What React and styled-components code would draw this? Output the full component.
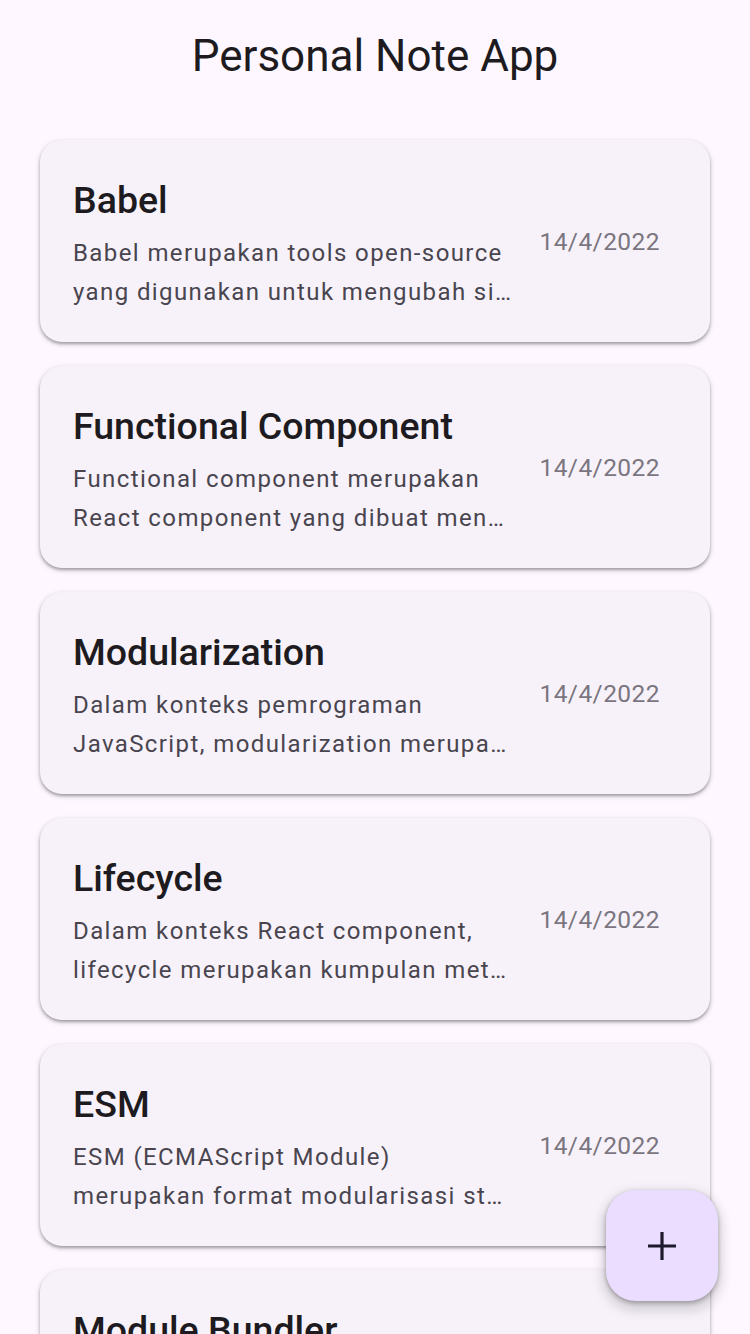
import styled, { createGlobalStyle } from 'styled-components';

const GlobalStyle = createGlobalStyle`
    html, body {
        margin: 0;
        padding: 0;
        background: #fef7ff;
        font-family: Roboto, "Noto Sans", sans-serif;
        color: #1d1b20;
    }
`;

const Page = styled.div`
    min-height: 100vh;
    background: #fef7ff;
`;

const Header = styled.header`
    height: 112px;
    display: flex;
    align-items: center;
    justify-content: center;
`;

const AppTitle = styled.h1`
    margin: 0;
    font-size: 44px;
    font-weight: 400;
    line-height: 1;
    color: #1d1b20;
`;

const List = styled.main`
    display: flex;
    flex-direction: column;
    gap: 24px;
    padding: 28px 40px 40px;
`;

const Card = styled.article`
    display: flex;
    align-items: center;
    gap: 28px;
    padding: 36px 50px 30px 33px;
    background: #f7f2fa;
    border-radius: 22px;
    box-shadow: 0 2px 3px rgba(0, 0, 0, 0.28), 0 2px 5px 1px rgba(0, 0, 0, 0.12);
`;

const Content = styled.div`
    flex: 1;
    min-width: 0;
`;

const NoteTitle = styled.h2`
    margin: 0 0 9px;
    font-size: 37.5px;
    font-weight: 500;
    line-height: 49px;
    color: #1d1b20;
`;

const Body = styled.p`
    margin: 0;
    font-size: 24px;
    line-height: 39px;
    letter-spacing: 1.4px;
    color: #49454f;
`;

const BodyLine = styled.span`
    display: block;
    white-space: nowrap;
    overflow: hidden;
    text-overflow: ellipsis;
`;

const DateText = styled.span`
    flex-shrink: 0;
    margin-bottom: 6px;
    font-size: 24.5px;
    line-height: 35px;
    letter-spacing: 0.44px;
    color: #7a757f;
`;

const Fab = styled.button`
    position: fixed;
    right: 32px;
    bottom: 33px;
    width: 112px;
    height: 111px;
    border: none;
    border-radius: 30px;
    background: #eaddff;
    display: flex;
    align-items: center;
    justify-content: center;
    cursor: pointer;
    box-shadow: 0 2px 5px rgba(0, 0, 0, 0.3), 0 6px 12px 4px rgba(0, 0, 0, 0.14);
`;

const notes = [
    { id: 1, title: 'Babel', body: 'Babel merupakan tools open-source yang digunakan untuk mengubah sintaks ECMAScript 2015+ menjadi sintaks yang didukung oleh JavaScript engine versi lama.', date: '14/4/2022' },
    { id: 2, title: 'Functional Component', body: 'Functional component merupakan React component yang dibuat menggunakan fungsi JavaScript.', date: '14/4/2022' },
    { id: 3, title: 'Modularization', body: 'Dalam konteks pemrograman JavaScript, modularization merupakan teknik dalam memecah atau menggunakan kode dalam berkas JavaScript secara terpisah.', date: '14/4/2022' },
    { id: 4, title: 'Lifecycle', body: 'Dalam konteks React component, lifecycle merupakan kumpulan method yang menjadi siklus hidup mulai dari component dibuat.', date: '14/4/2022' },
    { id: 5, title: 'ESM', body: 'ESM (ECMAScript Module) merupakan format modularisasi standar JavaScript.', date: '14/4/2022' },
    { id: 6, title: 'Module Bundler', body: 'Dalam konteks pemrograman JavaScript, module bundler merupakan tools yang digunakan untuk menggabungkan seluruh modul JavaScript.', date: '14/4/2022' },
];

// split off the first wrapped line so the second one can be cut with an ellipsis mid-word
const BODY_WIDTH = 439;
let ctx = null;
function splitLines(text) {
    if (!ctx) {
        ctx = document.createElement('canvas').getContext('2d');
        ctx.font = '400 24px Roboto';
        ctx.letterSpacing = '1.4px';
    }
    const words = text.split(' ');
    let first = '';
    let i = 0;
    for (; i < words.length; i++) {
        const next = first ? first + ' ' + words[i] : words[i];
        if (ctx.measureText(next).width > BODY_WIDTH) break;
        first = next;
    }
    return [first, words.slice(i).join(' ')];
}

function NoteCard({ note }) {
    const [first, rest] = splitLines(note.body);
    return (
        <Card>
            <Content>
                <NoteTitle>{note.title}</NoteTitle>
                <Body>
                    <BodyLine>{first}</BodyLine>
                    <BodyLine>{rest}</BodyLine>
                </Body>
            </Content>
            <DateText>{note.date}</DateText>
        </Card>
    );
}

export default function App() {
    return (
        <Page>
            <GlobalStyle />
            <Header>
                <AppTitle>Personal Note App</AppTitle>
            </Header>
            <List>
                {notes.map((note) => (
                    <NoteCard key={note.id} note={note} />
                ))}
            </List>
            <Fab aria-label="Tambah catatan">
                <svg width="48" height="48" viewBox="0 0 24 24" fill="#1d192b">
                    <path d="M19 12.8h-6.2V19h-1.6v-6.2H5v-1.6h6.2V5h1.6v6.2H19z" />
                </svg>
            </Fab>
        </Page>
    );
}
